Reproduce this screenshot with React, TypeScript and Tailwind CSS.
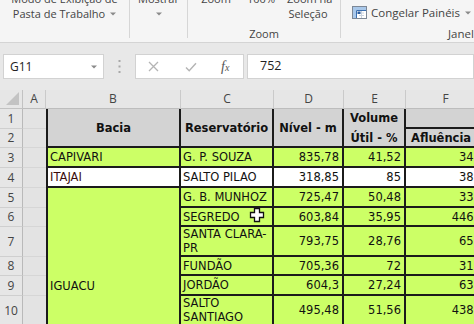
import React from 'react'

type DataRow = {
  n: number
  white?: boolean
  b?: string
  c: React.ReactNode
  d: string
  e: string
  f: string
}

const rows: DataRow[] = [
  { n: 3, b: 'CAPIVARI', c: 'G. P. SOUZA', d: '835,78', e: '41,52', f: '344' },
  { n: 4, white: true, b: 'ITAJAI', c: 'SALTO PILAO', d: '318,85', e: '85', f: '387' },
  { n: 5, c: 'G. B. MUNHOZ', d: '725,47', e: '50,48', f: '337' },
  { n: 6, c: 'SEGREDO', d: '603,84', e: '35,95', f: '4465' },
  {
    n: 7,
    c: (
      <>
        SANTA CLARA-
        <br />
        PR
      </>
    ),
    d: '793,75',
    e: '28,76',
    f: '652',
  },
  { n: 8, c: 'FUNDÃO', d: '705,36', e: '72', f: '318' },
  { n: 9, c: 'JORDÃO', d: '604,3', e: '27,24', f: '633' },
  {
    n: 10,
    c: (
      <>
        SALTO
        <br />
        SANTIAGO
      </>
    ),
    d: '495,48',
    e: '51,56',
    f: '4382',
  },
]

function Caret() {
  return (
    <svg width="6" height="4" viewBox="0 0 6 4" className="shrink-0">
      <path d="M0 0.5 L6 0.5 L3 3.5 Z" fill="#8a8a8a" />
    </svg>
  )
}

function Divider() {
  return <div className="h-[38px] w-px shrink-0 bg-[#d6d6d6]" />
}

function FreezeIcon() {
  return (
    <svg width="15" height="13" viewBox="0 0 15 13" className="shrink-0">
      <rect x="0.5" y="0.5" width="14" height="12" fill="#ffffff" stroke="#7d8896" />
      <rect x="1" y="1" width="13" height="3" fill="#a9c8ea" />
      <rect x="1" y="1" width="3" height="11" fill="#a9c8ea" />
      <path d="M4.5 4.5 H14 M4.5 4.5 V12" stroke="#3a6fb0" strokeWidth="1" />
      <path d="M7 7 H12 M7 9.5 H12 M9.5 5 V12" stroke="#c9d3df" strokeWidth="1" />
      <rect x="5.5" y="5.5" width="3" height="2.5" fill="#2f5f9e" />
    </svg>
  )
}

function Ribbon() {
  return (
    <div className="flex h-[43px] overflow-hidden border-b border-[#d4d4d4] bg-[#f5f5f5] font-['Open_Sans',sans-serif] text-[11px] leading-[15px] text-[#444]">
      <div className="flex w-[129px] shrink-0 flex-col items-center -mt-[9px]">
        <span className="whitespace-nowrap">Modo de Exibição de</span>
        <span className="flex items-center gap-[5px] whitespace-nowrap">
          Pasta de Trabalho <Caret />
        </span>
      </div>
      <Divider />
      <div className="flex w-[57px] shrink-0 flex-col items-center -mt-[9px]">
        <span>Mostrar</span>
        <span className="flex h-[15px] items-center">
          <Caret />
        </span>
      </div>
      <Divider />
      <div className="flex w-[152px] shrink-0 flex-col justify-between">
        <div className="flex whitespace-nowrap -mt-[9px]">
          <span className="w-[56px] text-center">Zoom</span>
          <span className="w-[34px] text-center">100%</span>
          <span className="ml-[9px] w-[42px] text-center">
            Zoom na
            <br />
            Seleção
          </span>
        </div>
        <span className="pb-[1px] text-center">Zoom</span>
      </div>
      <Divider />
      <div className="flex w-[240px] shrink-0 flex-col justify-between">
        <div className="flex items-center whitespace-nowrap pl-[11px] pt-[5px]">
          <FreezeIcon />
          <span className="ml-[4px] text-[11.5px]">Congelar Painéis</span>
          <span className="ml-[5px]">
            <Caret />
          </span>
        </div>
        <span className="pb-[1px] pl-[107px] whitespace-nowrap text-[11.5px]">Janela</span>
      </div>
    </div>
  )
}

function FormulaBar() {
  return (
    <div className="flex h-[47px] pl-[3px] pt-[11px] font-['Open_Sans',sans-serif] text-[12px] text-[#222]">
      <div className="flex h-[25px] w-[101px] shrink-0 items-center justify-between border border-[#d2d2d2] bg-white pl-[6px] pr-[6px]">
        <span>G11</span>
        <Caret />
      </div>
      <div className="flex h-[25px] w-[31px] shrink-0 items-center justify-center">
        <svg width="3" height="13" viewBox="0 0 3 13">
          <rect x="0.5" y="0" width="2" height="2" fill="#a8a8a8" />
          <rect x="0.5" y="5.5" width="2" height="2" fill="#a8a8a8" />
          <rect x="0.5" y="11" width="2" height="2" fill="#a8a8a8" />
        </svg>
      </div>
      <div className="flex h-[25px] w-[109px] shrink-0 items-center border border-[#d2d2d2] bg-white pl-[12px]">
        <svg width="11" height="11" viewBox="0 0 11 11">
          <path d="M1 1 L10 10 M10 1 L1 10" stroke="#b4b4b4" strokeWidth="1.3" />
        </svg>
        <svg width="12" height="10" viewBox="0 0 12 10" className="ml-[26px]">
          <path d="M1 5.5 L4.2 8.7 L11 1.2" stroke="#b4b4b4" strokeWidth="1.4" fill="none" />
        </svg>
        <span className="ml-[24px] font-['Liberation_Serif',serif] text-[14px] italic text-[#555]">
          f<span className="text-[10px]">x</span>
        </span>
      </div>
      <div className="ml-[3px] flex h-[25px] flex-1 items-center border border-[#d2d2d2] bg-white pl-[12px] text-[12.5px]">
        752
      </div>
    </div>
  )
}

const cell =
  'flex items-center overflow-hidden whitespace-nowrap border-r-2 border-b-2 border-[#1b1b1b] px-[2px]'
const num = cell + ' justify-end pr-[3px]'
const head =
  'row-span-2 flex items-center justify-center text-center font-bold border-r-2 border-b-2 border-[#1b1b1b] bg-[#d3d3d3] leading-[20px]'
const rowHead =
  "flex items-center justify-center border-r border-b border-r-[#b9b9b9] border-b-[#cfcfcf] bg-[#e6e6e6] font-['Open_Sans',sans-serif] text-[12px] text-[#444]"
const colA = 'border-b border-[#d6d6d6] bg-[#e3e3e3]'

function Sheet() {
  return (
    <div className="grid w-[486px] grid-cols-[23px_23px_135px_93px_70px_62px_80px] grid-rows-[19px_20px_19px_20px_20px_20px_19px_30px_19px_20px_30px] font-['DejaVu_Sans',Verdana,sans-serif] text-[11.5px] leading-[14px] text-[#111]">
      {/* column headers */}
      <div className="flex items-end justify-end border-r border-b border-[#c2c2c2] bg-[#e6e6e6] pb-[3px] pr-[3px]">
        <svg width="13" height="13" viewBox="0 0 13 13">
          <path d="M13 0 L13 13 L0 13 Z" fill="#c3c3c3" />
        </svg>
      </div>
      {['A', 'B', 'C', 'D', 'E', 'F'].map((l) => (
        <div
          key={l}
          className="flex items-center justify-center border-r border-b border-r-[#cacaca] border-b-[#bdbdbd] bg-[#e6e6e6] font-['Open_Sans',sans-serif] text-[12px] text-[#444]"
        >
          {l}
        </div>
      ))}

      {/* header rows 1-2 */}
      <div className={rowHead}>1</div>
      <div className={colA} />
      <div className={head + ' border-l-2'}>Bacia</div>
      <div className={head}>Reservatório</div>
      <div className={head}>Nível - m</div>
      <div className={head}>
        Volume
        <br />
        Útil - %
      </div>
      <div className="border-b-2 border-[#1b1b1b] bg-[#d3d3d3]" />
      <div className={rowHead}>2</div>
      <div className={colA} />
      <div className="flex items-center overflow-hidden whitespace-nowrap border-b-2 border-[#1b1b1b] bg-[#d3d3d3] pl-[5px] font-bold">
        Afluência
      </div>

      {/* data rows */}
      {rows.map((r) => {
        const bg = r.white ? 'bg-white' : 'bg-[#ccff66]'
        return (
          <React.Fragment key={r.n}>
            <div className={rowHead}>{r.n}</div>
            <div className={colA} />
            {r.b && <div className={`${cell} ${bg} border-l-2 ${r.white ? 'text-[#3a0c0c]' : ''}`}>{r.b}</div>}
            {r.n === 5 && (
              <div className={`${cell} row-span-6 items-start border-l-2 bg-[#ccff66] pt-[91px]`}>IGUACU</div>
            )}
            <div className={`${cell} ${bg}`}>
              <span>{r.c}</span>
            </div>
            <div className={`${num} ${bg}`}>{r.d}</div>
            <div className={`${num} ${bg}`}>{r.e}</div>
            <div className={`${num} ${bg}`}>{r.f}</div>
          </React.Fragment>
        )
      })}
    </div>
  )
}

export default function App() {
  return (
    <div className="relative h-[324px] w-[474px] overflow-hidden bg-[#e8e8e8]">
      <Ribbon />
      <FormulaBar />
      <Sheet />
      <svg
        width="16"
        height="16"
        viewBox="0 0 16 16"
        className="absolute left-[249px] top-[207px]"
      >
        <path
          d="M5.5 1.5 H10.5 V5.5 H14.5 V10.5 H10.5 V14.5 H5.5 V10.5 H1.5 V5.5 H5.5 Z"
          fill="#ffffff"
          stroke="#111"
          strokeWidth="1.3"
        />
      </svg>
    </div>
  )
}
